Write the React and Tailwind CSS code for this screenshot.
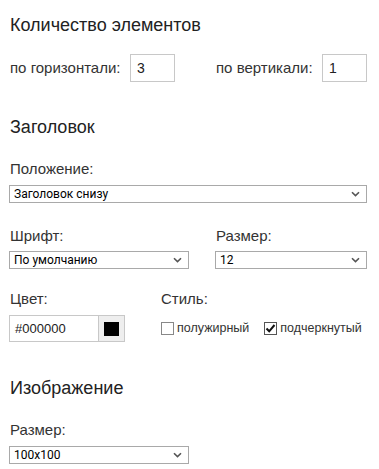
import React from "react";

const Chevron = () => (
  <svg width="9" height="6" viewBox="0 0 9 6" className="shrink-0">
    <path d="M1 1.2 L4.5 4.6 L8 1.2" fill="none" stroke="#555" strokeWidth="1.6" />
  </svg>
);

const Select = ({ value, className }) => (
  <div
    className={
      "h-[18px] border border-[#a9a9a9] bg-white flex items-center justify-between pl-[4px] pr-[6px] text-[12px] leading-[14px] text-black font-['Roboto',sans-serif] " +
      className
    }
  >
    <span>{value}</span>
    <Chevron />
  </div>
);

const Label = ({ children, className = "" }) => (
  <div className={"text-[15px] leading-[18px] text-[#333] " + className}>{children}</div>
);

const Heading = ({ children, className = "" }) => (
  <div className={"text-[18px] leading-[22px] text-[#222] " + className}>{children}</div>
);

export default function App() {
  return (
    <div className="w-[379px] h-[469px] bg-white pl-[9px] pt-[14px] font-['Liberation_Sans',Arial,sans-serif] overflow-hidden">
      <Heading className="pl-[1px]">Количество элементов</Heading>

      <div className="flex items-center mt-[18px] h-[28px] pl-[1px]">
        <span className="text-[15px] text-[#333] w-[120px]">по горизонтали:</span>
        <div className="w-[45px] h-[28px] border border-[#c8c8c8] flex items-center pl-[6px] text-[14px] text-[#222]">3</div>
        <span className="text-[15px] text-[#333] ml-[41px] w-[106px]">по вертикали:</span>
        <div className="w-[45px] h-[28px] border border-[#c8c8c8] flex items-center pl-[6px] text-[14px] text-[#222]">1</div>
      </div>

      <Heading className="mt-[34px] pl-[1px]">Заголовок</Heading>

      <Label className="mt-[22px] pl-[1px]">Положение:</Label>
      <Select value="Заголовок снизу" className="mt-[7px] w-[358px]" />

      <div className="flex mt-[24px]">
        <div className="w-[206px]">
          <Label className="pl-[1px]">Шрифт:</Label>
          <Select value="По умолчанию" className="mt-[6px] w-[180px]" />
        </div>
        <div>
          <Label className="pl-[1px]">Размер:</Label>
          <Select value="12" className="mt-[6px] w-[152px]" />
        </div>
      </div>

      <div className="flex mt-[21px]">
        <div className="w-[152px]">
          <Label className="pl-[1px]">Цвет:</Label>
          <div className="mt-[7px] flex w-[116px] h-[27px] border border-[#c8c8c8]">
            <div className="flex-1 flex items-center pl-[5px] text-[13px] text-[#222]">#000000</div>
            <div className="w-[26px] border-l border-[#c8c8c8] bg-[#eeeeee] flex items-center justify-center">
              <div className="w-[15px] h-[14px] bg-black" />
            </div>
          </div>
        </div>
        <div>
          <Label>Стиль:</Label>
          <div className="mt-[13px] flex items-center text-[12.5px] leading-[14px] text-[#333]">
            <div className="w-[13px] h-[13px] border border-[#888] bg-white" />
            <span className="ml-[3px]">полужирный</span>
            <div className="ml-[15px] w-[13px] h-[13px] border border-[#555] bg-white flex items-center justify-center">
              <svg width="11" height="11" viewBox="0 0 11 11">
                <path d="M1.5 5.5 L4.2 8.3 L9.5 2" fill="none" stroke="#111" strokeWidth="2" />
              </svg>
            </div>
            <span className="ml-[3px]">подчеркнутый</span>
          </div>
        </div>
      </div>

      <Heading className="mt-[35px] pl-[1px]">Изображение</Heading>
      <Label className="mt-[22px] pl-[1px]">Размер:</Label>
      <Select value="100x100" className="mt-[7px] w-[180px]" />
    </div>
  );
}
